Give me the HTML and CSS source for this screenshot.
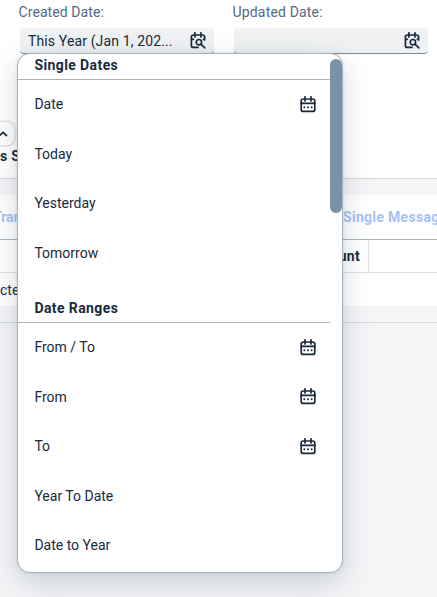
FILE: index.html
```html
<!DOCTYPE html>
<html lang="en">
<head>
<meta charset="utf-8">
<title>Date filters</title>
<link rel="stylesheet" href="styles.css">
</head>
<body>
<svg class="defs" aria-hidden="true">
  <symbol id="cal" viewBox="0 0 16 17">
    <rect x="1.2" y="3" width="13.6" height="12.4" rx="2"/>
    <path d="M1.2 7.3H14.8M5 .8V5M11 .8V5"/>
    <path class="dots" d="M4.3 11.2h.1M8 11.2h.1M11.6 11.2h.1"/>
  </symbol>
  <symbol id="cal-search" viewBox="0 0 16 17">
    <path d="M14.6 8V5a2 2 0 0 0-2-2H3.4a2 2 0 0 0-2 2v8.4a2 2 0 0 0 2 2H8M4.9 .8V5M11 .8V5M1.4 7.3H3.4M13.4 7.3h1.2M11 12.2l3.8 3.7"/>
    <circle cx="8.9" cy="10.2" r="2.7"/>
  </symbol>
</svg>
<main class="page">
  <section class="filters">
    <div class="field"><label class="label created">Created Date:</label><div class="input"><span class="value">This Year (Jan 1, 202...</span><svg class="icon"><use href="#cal-search"/></svg></div></div>
    <div class="field"><label class="label updated">Updated Date:</label><div class="input"><svg class="icon"><use href="#cal-search"/></svg></div></div>
    <button class="collapse"><svg viewBox="0 0 10 6"><path d="M1 5l4-3.6L9 5"/></svg></button>
    <h2 class="title">s S</h2>
  </section>
  <nav class="tabs"><span class="tab-left">Tran</span><span class="tab-right">Single Messag</span></nav>
  <div class="thead"><div class="th">unt</div></div>
  <div class="trow">cte</div>
  <div class="gap"></div>
</main>
<div class="popup">
  <div class="list">
    <h3 class="group first">Single Dates</h3>
    <div class="item"><span>Date</span><svg class="icon"><use href="#cal"/></svg></div>
    <div class="item"><span>Today</span></div>
    <div class="item"><span>Yesterday</span></div>
    <div class="item"><span>Tomorrow</span></div>
    <h3 class="group">Date Ranges</h3>
    <div class="item"><span>From / To</span><svg class="icon"><use href="#cal"/></svg></div>
    <div class="item"><span>From</span><svg class="icon"><use href="#cal"/></svg></div>
    <div class="item"><span>To</span><svg class="icon"><use href="#cal"/></svg></div>
    <div class="item"><span>Year To Date</span></div>
    <div class="item"><span>Date to Year</span></div>
  </div>
  <div class="scroll"><div class="thumb"></div></div>
</div>
</body>
</html>
```
FILE: styles.css
```css
* { box-sizing: border-box; }
body { margin: 0; width: 437px; height: 597px; overflow: hidden; background: #f4f5f7; color: #1a2a3c; font: 14px/20px Roboto, "Liberation Sans", sans-serif; }
.defs { position: absolute; width: 0; height: 0; }
.icon { width: 16px; height: 17px; flex: none; fill: none; stroke: #1a2a3c; stroke-width: 1.7; stroke-linecap: round; stroke-linejoin: round; }
.dots { stroke-width: 1.9; }
.page { height: 597px; overflow: hidden; }
.filters { position: relative; display: flex; gap: 20px; height: 179px; padding: 2px 8px 0 20px; background: #fff; border-bottom: 1px solid #d9dbde; }
.field { width: 194px; }
.label { display: block; height: 26px; margin-left: -1.5px; color: #556b82; letter-spacing: .08px; }
.updated { letter-spacing: .17px; }
.input { display: flex; align-items: center; justify-content: flex-end; height: 26px; padding: 0 8px; border-radius: 4px; border-bottom: 1px solid #758ca4; background: #eff1f2; }
.value { flex: 1; white-space: nowrap; letter-spacing: .13px; }
.collapse { position: absolute; left: -12px; top: 121px; width: 27px; height: 25px; padding: 0; border: 1px solid #e3e6e9; border-radius: 8px; background: #fff; box-shadow: 0 0 2px #c4c9cf; }
.collapse svg { display: block; width: 10px; height: 6px; margin: 0 0 0 9px; fill: none; stroke: #1a2a3c; stroke-width: 1.8; }
.title { position: absolute; left: 0; top: 146px; margin: 0; font-size: 14px; line-height: 20px; letter-spacing: .3px; }
.tabs { display: flex; justify-content: space-between; align-items: center; height: 45px; margin-top: 16px; border-bottom: 1px solid #a8b3be; background: #fff; color: #a6c3f5; font-weight: 700; white-space: nowrap; }
.tab-left { margin-left: -7px; }
.tab-right { width: 94px; letter-spacing: .3px; }
.thead { height: 33px; border-bottom: 1px solid #e0e2e4; background: #fff; }
.th { width: 369px; height: 32px; padding-right: 8px; border-right: 1px solid #e0e2e4; text-align: right; font-weight: 700; line-height: 32px; letter-spacing: .3px; }
.trow { height: 33px; background: #fff; line-height: 34px; }
.gap { height: 17px; border-bottom: 1px solid #d9dbde; }
.popup { position: absolute; left: 17px; top: 53px; display: flex; width: 326px; height: 519.5px; overflow: hidden; border: 1px solid #a8b5c1; border-radius: 13px; background: #fff; box-shadow: 0 10px 30px rgba(34,53,72,.2), 0 0 3px rgba(34,53,72,.16); }
.list { width: 312px; }
.group { height: 45px; margin: 0; padding: 20px 0 0 16.4px; border-bottom: 1px solid #a8b5c1; font-size: 14px; line-height: 20px; letter-spacing: .4px; }
.first { height: 26px; padding-top: 1px; }
.item { display: flex; align-items: center; justify-content: space-between; height: 49.5px; padding: 0 14.5px 1px 16.4px; }
.scroll { width: 12px; padding-top: 5px; }
.thumb { height: 154px; border-radius: 6px; background: #7b91a8; }
```
